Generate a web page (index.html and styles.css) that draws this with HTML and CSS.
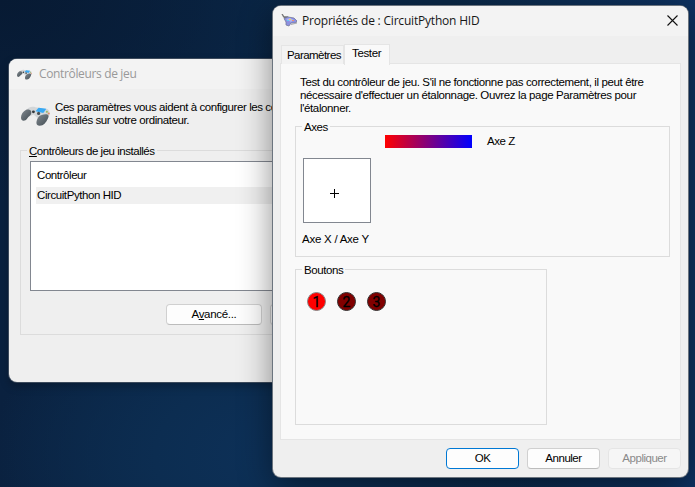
FILE: index.html
```html
<!DOCTYPE html>
<html lang="fr">
<head>
<meta charset="utf-8">
<title>Contrôleurs de jeu</title>
<link rel="stylesheet" href="styles.css">
</head>
<body>
<svg class="defs" width="0" height="0" aria-hidden="true">
  <defs>
    <linearGradient id="grip" x1="0" y1="0" x2="1" y2="1"><stop offset="0" stop-color="#828a90"/><stop offset="1" stop-color="#414b52"/></linearGradient>
    <symbol id="pad" viewBox="0 0 28 19">
      <path d="M4 5C7 1 10 0 14 1L26 3C28 5 28 8 27 10L18 13L12 8L6 11Z" fill="#d3d6d8"/>
      <path d="M5 3.500C9 2.500 11 5 9.500 8C8 10 7 10 6 12C4 15 0 15 0 11C0 8 2 5 5 3.500Z" fill="url(#grip)"/>
      <path d="M20 8.500C25 7 28 8 26 12C24 16 22 19 18 19C14 19 14.500 15 16 12C17 10 18 9 20 8.500Z" fill="url(#grip)"/>
      <path d="M17 1.500L24.500 2.500L21.500 6.500L14 5Z" fill="#38a9f4"/>
      <circle cx="12" cy="5.500" r="1.400" fill="#33393e"/><circle cx="17" cy="7" r="1.500" fill="#454e55"/>
      <circle cx="25" cy="5.500" r="1" fill="#9fba68"/><circle cx="26.800" cy="7" r="1" fill="#e58c68"/>
    </symbol>
  </defs>
</svg>
<main class="desktop">
  <section class="window back">
    <header class="titlebar inactive">
      <svg class="icon-small"><use href="#pad"/></svg>
      <h1 class="caption">Contrôleurs de jeu</h1>
    </header>
    <div class="intro">
      <svg class="icon-large"><use href="#pad"/></svg>
      <p><span class="line">Ces paramètres vous aident à configurer les co</span><span class="line">installés sur votre ordinateur.</span></p>
    </div>
    <div class="group installed">
      <h2 class="legend"><u>C</u>ontrôleurs de jeu installés</h2>
      <div class="list">
        <div class="row">Contrôleur</div>
        <div class="row selected">CircuitPython HID</div>
      </div>
      <div class="actions"><button class="btn">A<u>v</u>ancé...</button><button class="btn"></button></div>
    </div>
  </section>

  <section class="window front">
    <header class="titlebar">
      <svg class="icon-device" viewBox="0 0 17 14">
        <path d="M1 0L3 3L6 3L4 5M2 2L5 5" fill="none" stroke="#747474" stroke-width="1.300"/>
        <path d="M3 4.500L7 3L13 4L16 7L14 9L10 9L8 12L5 11L5 8Z" fill="#8c90e0" stroke="#75789a" stroke-width=".8"/>
        <path d="M5 5L9 4L13 6L10 8Z" fill="#aeb6f1"/>
        <path d="M8 5h2v1h-2z" fill="#f5d452"/><path d="M11 6h2v1h-2z" fill="#ed8d75"/><path d="M6 6h2v1h-2z" fill="#62cdf2"/>
        <path d="M10 10.500L16 9L15 8" fill="none" stroke="#aaaab0"/>
      </svg>
      <h1 class="caption">Propriétés de : CircuitPython HID</h1>
      <svg class="close" viewBox="0 0 11 11"><path d="M.5 .5L10.500 10.500M10.500 .5L.5 10.500" stroke="#111" stroke-width="1.100"/></svg>
    </header>
    <nav class="tabs"><div class="tab">Paramètres</div><div class="tab active">Tester</div></nav>
    <div class="page">
      <p class="help"><span class="line">Test du contrôleur de jeu. S'il ne fonctionne pas correctement, il peut être</span><span class="line">nécessaire d'effectuer un étalonnage. Ouvrez la page Paramètres pour</span><span class="line">l'étalonner.</span></p>
      <div class="group axes">
        <h2 class="legend">Axes</h2>
        <div class="axes-grid">
          <div class="zaxis"><div class="bar"></div><span>Axe Z</span></div>
          <div class="xy"><svg viewBox="0 0 9 9" width="9" height="9"><path d="M4.500 0V9M0 4.500H9" stroke="#000"/></svg></div>
          <div class="xylabel">Axe X / Axe Y</div>
        </div>
      </div>
      <div class="group buttons">
        <h2 class="legend">Boutons</h2>
        <div class="lamps"><span class="lamp on">1</span><span class="lamp">2</span><span class="lamp">3</span></div>
      </div>
    </div>
    <footer class="footer"><button class="btn default">OK</button><button class="btn">Annuler</button><button class="btn" disabled>Appliquer</button></footer>
  </section>
</main>
</body>
</html>
```
FILE: styles.css
```css
* { box-sizing: border-box; }
body { margin: 0; font: 11.5px/13px "Liberation Sans", Arial, sans-serif; letter-spacing: -.42px; color: #000; }
h1, h2, p { margin: 0; font-size: inherit; font-weight: normal; }
.defs { position: absolute; }
u { text-underline-offset: 1px; }
.desktop {
  position: relative; width: 695px; height: 487px; overflow: hidden;
  background: radial-gradient(ellipse 300px 180px at 290px 455px, #0d3159 0%, #0c2d51 45%, transparent 100%), radial-gradient(ellipse 330px 200px at 0 0, #071a33, transparent), linear-gradient(90deg, #0a213f 0%, #0a2748 35%, #0b2948 65%, #0d3262 100%);
}
.window { position: absolute; background: #efefef; border-radius: 8px; overflow: hidden; }
.back { left: 9px; top: 59px; width: 330px; height: 323px; box-shadow: 0 0 0 1px #3c4a5c, 0 4px 10px #0004; }
.front { left: 273px; top: 6px; width: 415px; height: 471px; box-shadow: 0 0 0 1px #6b747e, 0 8px 34px 0 #0007; }
.titlebar { height: 30px; background: #f3f3f3; display: flex; align-items: center; padding-left: 8px; }
.caption { font: 12px/16px "Open Sans", "Noto Sans", sans-serif; letter-spacing: -.2px; color: #171717; white-space: nowrap; }
.inactive .caption { color: #999; letter-spacing: -.35px; }
.icon-small { width: 15px; height: 11px; margin-right: 7px; }
.icon-large { width: 29px; height: 20px; margin-top: 5px; }
.icon-device { width: 17px; height: 14px; margin-right: 4px; }
.close { width: 11px; height: 11px; margin: 0 10px 1px auto; }
.line { display: block; white-space: nowrap; width: max-content; }
.intro { display: flex; gap: 5px; height: 61px; padding: 12px 0 0 12px; }
.intro svg { flex: none; }
.group { border: 1px solid #dcdcdc; }
.legend { width: max-content; height: 13px; margin: -6px 0 0 6px; padding: 0 2px; background: #f9f9f9; white-space: nowrap; }
.installed { margin-left: 11px; height: 185px; }
.installed .legend { background: #efefef; letter-spacing: -.47px; }
.list { margin: 3px 0 0 9px; height: 130px; border: 1px solid #828790; background: #fff; padding: 5px; }
.row { height: 20px; padding: 0 0 0 1px; line-height: 17px; }
.row.selected { background: #f0f0f0; height: 17px; }
.actions { display: flex; gap: 8px; padding: 13px 0 0 145px; }
.btn { height: 21px; width: 73px; padding: 0; border: 1px solid #d0d0d0; border-bottom-color: #bcbcbc; border-radius: 4px; background: #fdfdfd; font: inherit; letter-spacing: -.48px; color: #000; text-align: center; }
.actions .btn { width: 96px; flex: none; letter-spacing: -.3px; }
.tabs { display: flex; align-items: flex-end; height: 28px; padding-left: 8px; }
.tab { width: 63px; height: 19px; border: 1px solid #e5e5e5; border-bottom: 0; background: #f3f3f3; padding: 3px 0 0 5px; letter-spacing: -.55px; white-space: nowrap; }
.tab.active { width: 46px; height: 21px; margin-bottom: -1px; background: #f9f9f9; padding: 2px 0 0 7px; letter-spacing: -.35px; z-index: 1; }
.page { margin: -1px 7px 0; height: 377px; border: 1px solid #e5e5e5; background: #f9f9f9; padding: 12px 9px 0 14px; }
.help { padding-left: 5px; height: 50px; letter-spacing: -.37px; }
.axes { height: 131px; width: 375px; }
.axes-grid { padding: 1px 0 0 7px; }
.zaxis { display: flex; align-items: center; gap: 15px; padding-left: 82px; height: 13px; }
.bar { width: 87px; height: 13px; background: linear-gradient(90deg, #f00, #00f); }
.xy { margin-top: 10px; width: 68px; height: 65px; border: 1px solid #828790; background: #fff; padding: 30px 0 0 26px; }
.xy svg { display: block; }
.xylabel { margin: 10px 0 0 -1px; letter-spacing: -.25px; }
.buttons { width: 252px; height: 156px; margin-top: 12px; }
.lamps { display: flex; gap: 11px; padding: 15px 0 0 11px; }
.lamp { width: 19px; height: 19px; border: 1px solid #333; border-radius: 50%; background: #800000; font: 14px/18px Roboto, sans-serif; letter-spacing: 0; -webkit-text-stroke: .3px #000; text-align: center; }
.lamp.on { border: 1px solid #888; background: #f00; }
.footer { display: flex; justify-content: flex-end; gap: 8px; padding: 8px 7px 0 0; }
.default { border: 1px solid #0078d4; }
.btn:disabled { background: #f6f6f6; border-color: #e5e5e5; color: #8a8a8a; }
```
